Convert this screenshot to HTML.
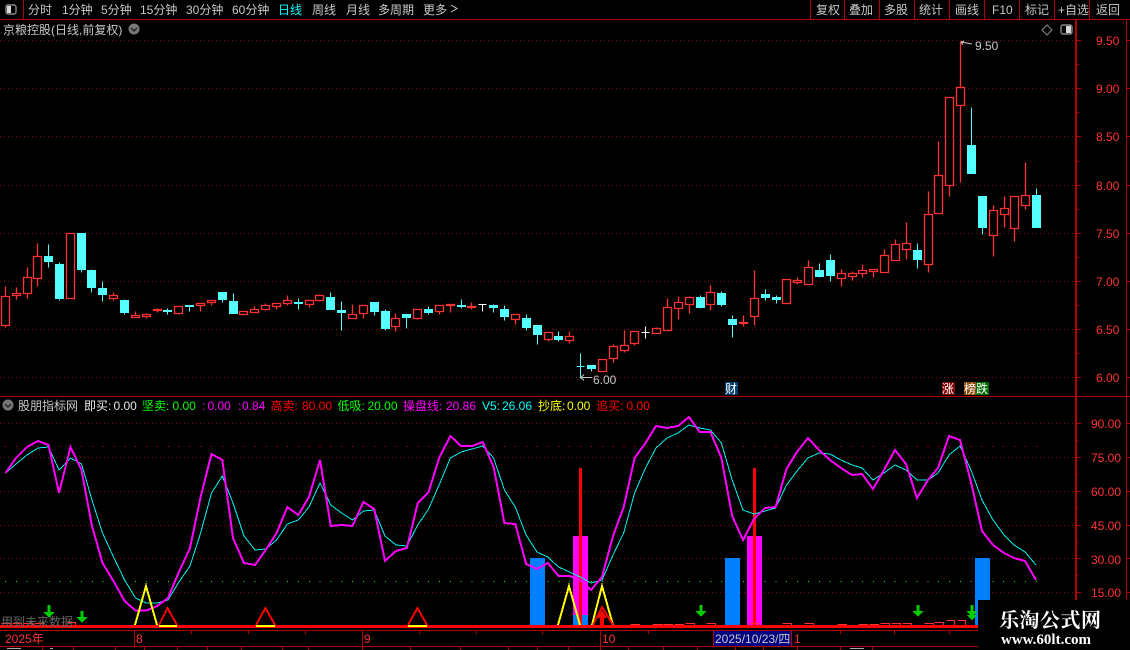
<!DOCTYPE html>
<html><head><meta charset="utf-8"><style>
html,body{margin:0;padding:0;background:#000;width:1130px;height:650px;overflow:hidden}
svg{display:block;font-family:"Liberation Sans","WenQuanYi Zen Hei","Noto Sans CJK SC",sans-serif;font-size:12px}
.g{fill:#c8c8c8}.r{fill:#ff3232}
</style></head><body>
<svg width="1130" height="650" viewBox="0 0 1130 650" xmlns="http://www.w3.org/2000/svg">
<rect width="1130" height="650" fill="#000"/>
<g shape-rendering="crispEdges">
<g fill="none" stroke="#840808" stroke-dasharray="1 3">
<path d="M0 40.5H1075M0 88.5H1075M0 136.5H1075M0 185.5H1075M0 233.5H1075M0 281.5H1075M0 329.5H1075M0 377.5H1075"/>
<path d="M0 423.5H1075M0 457.5H1075M0 491.5H1075M0 525.5H1075M0 558.5H1075M0 592.5H1075"/>
</g>
<path d="M5 446.5H1037" stroke="#ff0000" stroke-dasharray="1 9.85" fill="none"/>
<path d="M5 581.5H1037" stroke="#00ff00" stroke-dasharray="1 9.85" fill="none"/>
<path shape-rendering="geometricPrecision" stroke-width="1.3" fill="none" stroke="#ff3232" d="M5.5 286.5V296.5M5.5 325.5V327.5M1.5 296.5h8V325.5h-8zM16.5 287.5V293.5M16.5 295.5V299.5M12.5 293.5h8V295.5h-8zM27.5 267.5V277.5M27.5 293.5V298.5M23.5 277.5h8V293.5h-8zM37.5 243.5V256.5M37.5 278.5V286.5M33.5 256.5h8V278.5h-8zM66.5 233.5h8V298.5h-8zM113.5 292.5V295.5M113.5 298.5V300.5M109.5 295.5h8V298.5h-8zM135.5 311.5V315.5M131.5 315.5h8V317.5h-8zM146.5 313.5V314.5M146.5 316.5V318.5M142.5 314.5h8V316.5h-8zM157.5 308.5V312.5M153.5 309.5h8V310.5h-8zM178.5 313.5V314.5M174.5 306.5h8V313.5h-8zM200.5 305.5V311.5M196.5 303.5h8V305.5h-8zM211.5 302.5V305.5M207.5 300.5h8V302.5h-8zM239.5 311.5h8V314.5h-8zM254.5 306.5V309.5M250.5 309.5h8V312.5h-8zM265.5 303.5V305.5M265.5 309.5V310.5M261.5 305.5h8V309.5h-8zM276.5 306.5V309.5M272.5 303.5h8V306.5h-8zM287.5 295.5V300.5M287.5 303.5V305.5M283.5 300.5h8V303.5h-8zM309.5 304.5V307.5M305.5 300.5h8V304.5h-8zM319.5 294.5V295.5M319.5 300.5V301.5M315.5 295.5h8V300.5h-8zM352.5 304.5V314.5M348.5 314.5h8V318.5h-8zM363.5 313.5V318.5M359.5 305.5h8V313.5h-8zM395.5 313.5V318.5M395.5 326.5V331.5M391.5 318.5h8V326.5h-8zM417.5 318.5V319.5M413.5 309.5h8V318.5h-8zM439.5 311.5V314.5M435.5 305.5h8V311.5h-8zM450.5 305.5V312.5M446.5 304.5h8V305.5h-8zM471.5 302.5V309.5M467.5 306.5h8V307.5h-8zM515.5 319.5V324.5M511.5 314.5h8V319.5h-8zM548.5 339.5V341.5M544.5 332.5h8V339.5h-8zM569.5 331.5V336.5M569.5 340.5V343.5M565.5 336.5h8V340.5h-8zM598.5 359.5h8V371.5h-8zM613.5 344.5V346.5M613.5 358.5V362.5M609.5 346.5h8V358.5h-8zM624.5 330.5V345.5M624.5 350.5V352.5M620.5 345.5h8V350.5h-8zM634.5 343.5V345.5M630.5 331.5h8V343.5h-8zM656.5 327.5V328.5M652.5 328.5h8V333.5h-8zM667.5 298.5V307.5M663.5 307.5h8V330.5h-8zM678.5 296.5V302.5M678.5 308.5V319.5M674.5 302.5h8V308.5h-8zM689.5 296.5V297.5M689.5 304.5V313.5M685.5 297.5h8V304.5h-8zM710.5 285.5V292.5M710.5 304.5V310.5M706.5 292.5h8V304.5h-8zM743.5 315.5V326.5M739.5 322.5h8V323.5h-8zM754.5 270.5V298.5M754.5 316.5V325.5M750.5 298.5h8V316.5h-8zM782.5 279.5h8V303.5h-8zM797.5 277.5V280.5M797.5 282.5V284.5M793.5 280.5h8V282.5h-8zM808.5 260.5V267.5M804.5 267.5h8V284.5h-8zM841.5 269.5V273.5M841.5 278.5V286.5M837.5 273.5h8V278.5h-8zM852.5 271.5V273.5M852.5 276.5V280.5M848.5 273.5h8V276.5h-8zM862.5 264.5V270.5M862.5 273.5V277.5M858.5 270.5h8V273.5h-8zM873.5 271.5V277.5M869.5 269.5h8V271.5h-8zM884.5 249.5V255.5M880.5 255.5h8V272.5h-8zM895.5 239.5V244.5M891.5 244.5h8V260.5h-8zM906.5 222.5V243.5M906.5 249.5V259.5M902.5 243.5h8V249.5h-8zM928.5 191.5V214.5M928.5 264.5V272.5M924.5 214.5h8V264.5h-8zM938.5 141.5V175.5M934.5 175.5h8V213.5h-8zM949.5 185.5V196.5M945.5 97.5h8V185.5h-8zM960.5 41.5V87.5M960.5 105.5V182.5M956.5 87.5h8V105.5h-8zM993.5 205.5V210.5M993.5 235.5V256.5M989.5 210.5h8V235.5h-8zM1004.5 196.5V208.5M1004.5 214.5V227.5M1000.5 208.5h8V214.5h-8zM1014.5 228.5V241.5M1010.5 196.5h8V228.5h-8zM1025.5 162.5V195.5M1025.5 205.5V209.5M1021.5 195.5h8V205.5h-8z"/>
<path fill="#54ffff" stroke="#54ffff" d="M48.5 244.5V256.5M48.5 261.5V267.5M44.5 256.5h8V261.5h-8zM59.5 262.5V264.5M59.5 298.5V300.5M55.5 264.5h8V298.5h-8zM81.5 269.5V272.5M77.5 233.5h8V269.5h-8zM91.5 269.5V270.5M91.5 287.5V292.5M87.5 270.5h8V287.5h-8zM102.5 281.5V288.5M102.5 294.5V301.5M98.5 288.5h8V294.5h-8zM124.5 299.5V300.5M124.5 312.5V314.5M120.5 300.5h8V312.5h-8zM167.5 308.5V314.5M163.5 310.5h8V311.5h-8zM189.5 305.5V311.5M185.5 305.5h8V306.5h-8zM222.5 299.5V302.5M218.5 292.5h8V299.5h-8zM233.5 293.5V301.5M229.5 301.5h8V313.5h-8zM298.5 298.5V309.5M294.5 302.5h8V303.5h-8zM330.5 292.5V297.5M326.5 297.5h8V309.5h-8zM341.5 301.5V330.5M337.5 310.5h8V312.5h-8zM374.5 311.5V315.5M370.5 302.5h8V311.5h-8zM385.5 309.5V311.5M385.5 328.5V330.5M381.5 311.5h8V328.5h-8zM406.5 317.5V328.5M402.5 314.5h8V317.5h-8zM428.5 306.5V309.5M428.5 312.5V314.5M424.5 309.5h8V312.5h-8zM461.5 299.5V308.5M457.5 305.5h8V306.5h-8zM493.5 304.5V312.5M489.5 305.5h8V307.5h-8zM504.5 305.5V320.5M500.5 309.5h8V316.5h-8zM526.5 314.5V330.5M522.5 318.5h8V327.5h-8zM537.5 334.5V344.5M533.5 325.5h8V334.5h-8zM558.5 331.5V341.5M554.5 336.5h8V339.5h-8zM580.5 353.5V378.5M576.5 366.5h8M591.5 368.5V371.5M587.5 365.5h8V368.5h-8zM700.5 295.5V308.5M696.5 297.5h8V307.5h-8zM721.5 291.5V306.5M717.5 293.5h8V304.5h-8zM732.5 315.5V337.5M728.5 319.5h8V324.5h-8zM765.5 289.5V300.5M761.5 294.5h8V297.5h-8zM776.5 295.5V303.5M772.5 297.5h8V299.5h-8zM819.5 263.5V277.5M815.5 270.5h8V276.5h-8zM830.5 254.5V281.5M826.5 260.5h8V275.5h-8zM917.5 243.5V268.5M913.5 250.5h8V259.5h-8zM971.5 107.5V145.5M967.5 145.5h8V173.5h-8zM982.5 227.5V234.5M978.5 196.5h8V227.5h-8zM1036.5 188.5V195.5M1032.5 195.5h8V227.5h-8z"/>
<path fill="none" stroke="#fff" d="M478.5 304.5h8M482.5 304.5V311.5M645.5 326.5V338.5M641.5 332.5h8"/>

<rect x="530" y="558" width="15" height="68" fill="#0080ff"/>
<rect x="573" y="615" width="15" height="11" fill="#0080ff"/>
<rect x="573" y="536" width="15" height="79" fill="#ff00ff"/>
<rect x="579" y="468" width="3" height="158" fill="#ff0000"/>
<rect x="725" y="558" width="15" height="68" fill="#0080ff"/>
<rect x="747" y="536" width="15" height="90" fill="#ff00ff"/>
<rect x="753" y="468" width="3" height="158" fill="#ff0000"/>
<rect x="975" y="558" width="15" height="68" fill="#0080ff"/>

<path fill="none" stroke="#ff3232" d="M1.5 623.5h9v2M12.5 623.5h9v2M23.5 623.5h9v2M34.5 623.5h9v2M67.5 622.5h8v3M630.5 624.5h9v1M652.5 624.5h10v1M663.5 624.5h9v1M674.5 624.5h9v1M685.5 623.5h9v2M706.5 623.5h9v2M750.5 623.5h8v2M782.5 623.5h9v2M804.5 623.5h9v2M837.5 624.5h9v1M858.5 624.5h9v1M869.5 624.5h9v1M880.5 623.5h9v2M891.5 623.5h9v2M902.5 623.5h9v2M924.5 623.5h9v2M934.5 622.5h9v3M946.5 620.5h8v5M957.5 620.5h8v5"/>

<polyline fill="none" stroke="#00f0f0" points="5.5,473 16,464 27,455 38,448 48.5,447 59,470 70.5,458 81.5,464 92,500 102.5,533 114,558 124.6,580 135.5,598 146.3,603 157.2,603 168,600 178.9,582 190,566 200.6,533 211.5,493 222.3,476 233,503 244,536 255,550 265.7,549 276.6,540 287.4,524 298.3,520 309,507 320,483 330.8,505 341.6,513 352.5,520 363.4,511 374.2,510 385,536 396,545 406.9,546 417.8,525 428.6,509 439.5,484 450.4,458 461,452 472,449 482.7,446 493.6,458 504.4,490 515.3,507 526.1,535 537,552 547.8,557 558.6,567 569.5,572 580.4,577 591,583 602,580 613,555 623.7,533 634.6,493 645.5,468 656,448 667,438 678,433 689,425 699.7,428 710.5,430 721.4,443 732.2,480 743,510 754,514 765,511 775.6,508 786.5,485 797,471 808,458 819,453 830,454 841,460 852,465 862,468 873,480 884,473 895,465 906,470 917,480 928,480 938,473 949,455 960,446 971,470 982,500 993,520 1004,535 1014,545 1025,552 1036,565"/>
<polyline fill="none" stroke="#ff00ff" stroke-width="2" points="5.5,473 16,458 27,447 38,441 48.5,445 59,493 70.5,447 81.5,470 92,526 102.5,563 114,582 124.6,601 135.5,610.5 146.3,610.5 157.2,606 168,598 178.9,572 190,548 200.6,497 211.5,454 222.3,460 233,538 244,563 255,565 265.7,550 276.6,533 287.4,507 298.3,515 309,497 320,460 330.8,526 341.6,525 352.5,526 363.4,502 374.2,509 385,561 396,551 406.9,548 417.8,503 428.6,492 439.5,457 450.4,436 461,446 472,446 482.7,442 493.6,467 504.4,523 515.3,524 526.1,564 537,569 547.8,563 558.6,576 569.5,576 580.4,580 591,590 602,577 613,536 623.7,507 634.6,458 645.5,443 656,426 667,428 678,426 689,417 699.7,432 710.5,432 721.4,458 732.2,516 743,540 754,519 765,508 775.6,507 786.5,469 797,452 808,438 819,450 830,460 841,468 852,475 862,474 873,489 884,470 895,450 906,464 917,498 928,480 938,468 949,436 960,440 971,482 982,531 993,545 1004,553 1014,558 1025,561 1036,580"/>
</g>

<g shape-rendering="crispEdges">
<path fill="none" stroke="#ffff00" stroke-width="2" d="M135 625L146 586L157 625M558 625L569 586L580 625M592 625L602 586L613 625"/>
<path fill="none" stroke="#ff0000" stroke-width="2" d="M159 625L167.5 608L177 625M256 625L265.5 608L275 625M408 625L417.5 608L427 625M593 625L602 607L613 625"/>
<path fill="#ff0000" d="M602 610L607 618H604V625H600V618H597Z"/>
<rect x="0" y="625" width="978" height="3" fill="#ff0000"/>
<path d="M159 625h18v2h-18zM256 625h19v2h-19zM408 625h19v2h-19z" fill="#ffff00"/>
<path fill="#00cc00" d="M47.500 605h3v7h4l-5.500 6-5.500-6h4zM80.500 611h3v6h4l-5.500 6-5.500-6h4zM699.500 605h3v6h4l-5.500 6-5.500-6h4zM916.500 605h3v6h4l-5.500 6-5.500-6h4zM970.500 605h3v6h4l-5.500 6-5.500-6h4zM970.500 611h3v4h4l-5.500 5-5.500-5h4z"/>
</g>
<text x="1" y="626" fill="#666">用到未来数据</text>

<g shape-rendering="crispEdges" fill="none" stroke="#b40000">
<path d="M0 19.5H1130M23.5 0V19M810.5 0V19M844.5 0V19M879.5 0V19M914.5 0V19M949.5 0V19M984.5 0V19M1019.5 0V19M1054.5 0V19M1089.5 0V19"/>
<path d="M0 396.5H1130M0 630.5H1075M0 646.5H1075"/>
<path d="M1075.5 20V650M1076.5 20V650M1126.5 20V650"/>
<path d="M1076 40.5h5M1076 88.5h5M1076 136.5h5M1076 185.5h5M1076 233.5h5M1076 281.5h5M1076 329.5h5M1076 377.5h5M1076 64.5h3M1076 112.5h3M1076 161.5h3M1076 209.5h3M1076 257.5h3M1076 305.5h3M1076 353.5h3"/>
<path d="M1076 423.5h5M1076 457.5h5M1076 491.5h5M1076 525.5h5M1076 558.5h5M1076 592.5h5M1076 440.5h2M1076 474.5h2M1076 508.5h2M1076 542.5h2M1076 575.5h2"/>
<path d="M1127 40.5h3M1127 88.5h3M1127 136.5h3M1127 185.5h3M1127 233.5h3M1127 281.5h3M1127 329.5h3M1127 377.5h3M1127 423.5h3M1127 457.5h3M1127 491.5h3M1127 525.5h3M1127 558.5h3M1127 592.5h3"/>
<path d="M134.5 631V646M362.5 631V646M600.5 631V646M713.5 631V646M791.5 631V646M191.5 631v3M248.5 631v3M305.5 631v3M419.5 631v3M476.5 631v3M542.5 631v3M648.5 631v3M840.5 631v3M894.5 631v3M949.5 631v3"/>
<path d="M42.5 646V650M73.5 646V650M115.5 646V650M144.5 646V650M177.5 646V650M207.5 646V650M241.5 646V650M282.5 646V650M308.5 646V650M362.5 646V650M410.5 646V650M460.5 646V650M508.5 646V650M537.5 646V650M568.5 646V650M600.5 646V650M628.5 646V650M663.5 646V650M697.5 646V650M735.5 646V650M763.5 646V650M797.5 646V650M840.5 646V650M872.5 646V650"/>
</g>
<rect x="714" y="631" width="77" height="15" fill="#000080" shape-rendering="crispEdges"/>
<path d="M7 648.5h14M50 648.5h3M850 648.5h14" stroke="#aaa" shape-rendering="crispEdges"/>

<rect x="6" y="5" width="10" height="9" rx="2" fill="none" stroke="#8a8a8a" stroke-width="1.4"/>
<rect x="7" y="6" width="4" height="7" fill="#d8d8d8"/>
<g class="g">
<text x="28" y="14">分时</text><text x="62" y="14">1分钟</text><text x="101" y="14">5分钟</text><text x="140" y="14">15分钟</text><text x="186" y="14">30分钟</text><text x="232" y="14">60分钟</text><text x="278" y="14" fill="#00ffff" style="fill:#00ffff">日线</text><text x="312" y="14">周线</text><text x="346" y="14">月线</text><text x="378" y="14">多周期</text><text x="423" y="14">更多</text>
<text x="816" y="14">复权</text><text x="849" y="14">叠加</text><text x="884" y="14">多股</text><text x="919" y="14">统计</text><text x="955" y="14">画线</text><text x="992" y="14">F10</text><text x="1025" y="14">标记</text><text x="1058" y="14">+自选</text><text x="1096" y="14">返回</text>
<text x="3" y="34">京粮控股(日线,前复权)</text>
<text x="18" y="410">股朋指标网</text>
<text x="975" y="50">9.50</text><text x="593" y="384">6.00</text>
<text x="715" y="643" style="fill:#c8c8c8">2025/10/23/四</text>
</g>
<path d="M451 5l6 3.500-6 3.500" fill="none" stroke="#c8c8c8"/>
<circle cx="134" cy="29" r="5.500" fill="#777"/><path d="M131 28l3 3 3-3" fill="none" stroke="#222" stroke-width="1.500"/>
<circle cx="8" cy="405" r="5.500" fill="#777"/><path d="M5 404l3 3 3-3" fill="none" stroke="#222" stroke-width="1.500"/>
<path d="M1047 25l5 5-5 5-5-5z" fill="none" stroke="#8a8a8a"/>
<rect x="1061" y="25" width="11" height="9" rx="2" fill="none" stroke="#8a8a8a" stroke-width="1.400"/>
<rect x="1066" y="26" width="5" height="7" fill="#d8d8d8"/>
<path d="M961 42l11 2M961 42l3-1M961 42l2 3M581 377.500H592M581 377.500l3-3M581 377.500l3 3" fill="none" stroke="#c8c8c8"/>

<rect x="725" y="382" width="13" height="13" fill="#003c70"/><text x="725" y="393" fill="#fff">财</text>
<rect x="942" y="382" width="13" height="13" fill="#800000"/><text x="942" y="393" fill="#fff">涨</text>
<rect x="964" y="382" width="12" height="13" fill="#8a4a0a"/><text x="964" y="393" fill="#fff">榜</text>
<rect x="976" y="382" width="13" height="13" fill="#006a00"/><text x="976" y="393" fill="#fff">跌</text>

<g class="r">
<text x="1096" y="45">9.50</text><text x="1096" y="93">9.00</text><text x="1096" y="141">8.50</text><text x="1096" y="190">8.00</text><text x="1096" y="238">7.50</text><text x="1096" y="286">7.00</text><text x="1096" y="334">6.50</text><text x="1096" y="382">6.00</text>
<text x="1091" y="428">90.00</text><text x="1091" y="462">75.00</text><text x="1091" y="496">60.00</text><text x="1091" y="530">45.00</text><text x="1091" y="564">30.00</text><text x="1091" y="597">15.00</text>
<text x="5" y="643">2025年</text><text x="136" y="643">8</text><text x="364" y="643">9</text><text x="602" y="643">10</text><text x="794" y="643">1</text>
</g>

<text x="84" y="410" fill="#e8e8e8">即买:</text><text x="113.500" y="410" fill="#e8e8e8">0.00</text>
<text x="142" y="410" fill="#00ff00">坚卖:</text><text x="172.500" y="410" fill="#00ff00">0.00</text>
<text x="202" y="410" fill="#ff00ff">:</text><text x="207.500" y="410" fill="#ff00ff">0.00</text>
<text x="238" y="410" fill="#ff00ff">:</text><text x="242" y="410" fill="#ff00ff">0.84</text>
<text x="270.500" y="410" fill="#ff0000">高卖:</text><text x="302" y="410" fill="#ff0000">80.00</text>
<text x="337.500" y="410" fill="#00ff00">低吸:</text><text x="367.500" y="410" fill="#00ff00">20.00</text>
<text x="403" y="410" fill="#ff00ff">操盘线:</text><text x="446" y="410" fill="#ff00ff">20.86</text>
<text x="482" y="410" fill="#00ffff">V5:</text><text x="502" y="410" fill="#00ffff">26.06</text>
<text x="538" y="410" fill="#ffff00">抄底:</text><text x="567" y="410" fill="#ffff00">0.00</text>
<text x="596" y="410" fill="#ff0000">追买:</text><text x="626.500" y="410" fill="#ff0000">0.00</text>

<rect x="978" y="600" width="152" height="50" fill="#000"/>
<text x="999" y="627" fill="#fff" font-weight="700" style="font-family:'Noto Serif CJK SC','Liberation Serif',serif;font-size:20px;letter-spacing:.5px">乐淘公式网</text>
<text x="1001" y="644" fill="#fff" font-weight="700" style="font-family:'Liberation Serif',serif;font-size:15px">www.60lt.com</text>
</svg>
</body></html>
